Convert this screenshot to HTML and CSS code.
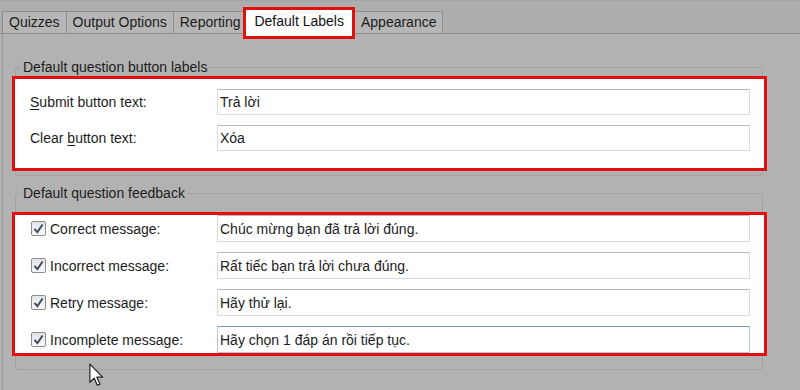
FILE: index.html
```html
<!DOCTYPE html>
<html lang="vi">
<head>
  <meta charset="UTF-8">
  <title>Default Labels</title>
  <link rel="stylesheet" href="styles.css">
</head>
<body>
  <div class="window">
    <div class="tabs">
      <div class="tab">Quizzes</div>
      <div class="tab">Output Options</div>
      <div class="tab">Reporting</div>
      <div class="tab active">Default Labels</div>
      <div class="tab">Appearance</div>
    </div>

    <div class="panel">
      <fieldset class="group group-buttons">
        <legend>Default question button labels</legend>
        <div class="highlight rows-buttons">
          <label class="row-label"><u>S</u>ubmit button text:</label>
          <input class="field" type="text" value="Trả lời">
          <label class="row-label">Clear <u>b</u>utton text:</label>
          <input class="field" type="text" value="Xóa">
        </div>
      </fieldset>

      <fieldset class="group group-feedback">
        <legend>Default question feedback</legend>
        <div class="highlight rows-feedback">
          <label class="row-label check-label"><span class="check"><svg viewBox="0 0 10 10" width="11" height="11"><path d="M1.3 5.3 L4 8.3 L8.7 1.3" fill="none" stroke="#3d4a5c" stroke-width="1.7"/></svg></span>Correct message:</label>
          <input class="field" type="text" value="Chúc mừng bạn đã trả lời đúng.">
          <label class="row-label check-label"><span class="check"><svg viewBox="0 0 10 10" width="11" height="11"><path d="M1.3 5.3 L4 8.3 L8.7 1.3" fill="none" stroke="#3d4a5c" stroke-width="1.7"/></svg></span>Incorrect message:</label>
          <input class="field" type="text" value="Rất tiếc bạn trả lời chưa đúng.">
          <label class="row-label check-label"><span class="check"><svg viewBox="0 0 10 10" width="11" height="11"><path d="M1.3 5.3 L4 8.3 L8.7 1.3" fill="none" stroke="#3d4a5c" stroke-width="1.7"/></svg></span>Retry message:</label>
          <input class="field" type="text" value="Hãy thử lại.">
          <label class="row-label check-label"><span class="check"><svg viewBox="0 0 10 10" width="11" height="11"><path d="M1.3 5.3 L4 8.3 L8.7 1.3" fill="none" stroke="#3d4a5c" stroke-width="1.7"/></svg></span>Incomplete message:</label>
          <input class="field focused" type="text" value="Hãy chọn 1 đáp án rồi tiếp tục.">
        </div>
      </fieldset>
    </div>

    <!-- mouse pointer -->
    <svg class="pointer" viewBox="0 0 13 20" width="17" height="24">
      <path d="M1 1 L1 16 L4.5 12.6 L7.2 18.6 L9.4 17.6 L6.8 11.8 L11.6 11.8 Z" fill="#fff" stroke="#222" stroke-width="1" stroke-linejoin="round"/>
    </svg>
  </div>
</body>
</html>
```

FILE: styles.css
```css
/* 对话框样式 */
body {
  margin: 0;
  background-color: #b2b2b2;
  font-family: "Liberation Sans", Arial, sans-serif;
  font-size: 14px;
  color: #1c1c1c;
}
.window {
  position: relative;
  height: 390px;
  overflow: hidden;
  border-top: 1px solid #a4a4a4;
}

/* 标签页 */
.tabs {
  display: flex;
  align-items: flex-end;
  height: 32px;
  padding-left: 2px;
  border-bottom: 1px solid #8e8e8e;
  background-color: #adadad;
}
.tab {
  height: 21px;
  line-height: 21px;
  padding: 0 6px;
  margin-right: -1px;
  border: 1px solid #8e8e8e;
  border-bottom: none;
  background-color: #b6b6b6;
  white-space: nowrap;
}
.tab.active {
  position: relative;
  z-index: 1;
  height: 22px;
  line-height: 22px;
  padding: 0 8px 4px 8px;
  margin-left: -3px;
  margin-bottom: -6px;
  border: 3px solid #e0100f;
  background-color: #ffffff;
  color: #111111;
}

/* 面板 */
.panel {
  margin-left: 2px;
  padding-top: 25px;
  border-left: 1px solid #9a9a9a;
  height: 356px;
}
.group {
  margin: 0 37px 0 12px;
  padding: 0 0 4px 0;
  border: 1px solid #a2a2a2;
  border-radius: 3px;
}
.group legend {
  margin-left: 5px;
  padding: 0 2px;
  line-height: 16px;
}
.group-feedback {
  margin-top: 9px;
  padding-bottom: 13px;
}
.highlight {
  display: grid;
  grid-template-columns: 187px 1fr;
  align-items: center;
  margin: 1px -5px 0 -4px;
  padding: 10px 14px 17px 15px;
  border: 3px solid #e0100f;
  background-color: #ffffff;
}
.rows-buttons {
  row-gap: 10px;
}
.rows-feedback {
  margin-top: 11px;
  padding-top: 0;
  padding-bottom: 0;
  row-gap: 10px;
}
.row-label {
  white-space: nowrap;
}
.row-label u {
  text-decoration-thickness: 1px;
  text-underline-offset: 2px;
}
.check-label {
  display: flex;
  align-items: center;
}
.check {
  display: inline-flex;
  align-items: center;
  justify-content: center;
  width: 13px;
  height: 13px;
  margin: 0 4px 0 1px;
  border: 1px solid #8a8f97;
  border-radius: 2px;
  background: linear-gradient(#e1e3e7, #fbfbfc);
}

/* 输入框 */
.field {
  box-sizing: border-box;
  width: 100%;
  height: 26px;
  margin: 0;
  padding: 0 2px;
  font-family: "Liberation Sans", Arial, sans-serif;
  font-size: 14px;
  color: #1c1c1c;
  background-color: #ffffff;
  border: 1px solid #dadada;
  border-top-color: #b9b9b9;
  border-radius: 1px;
  outline: none;
}
.rows-feedback .field {
  height: 27px;
}
.field.focused {
  border-color: #b5c7db;
  border-top-color: #7d9bbd;
}

/* 鼠标指针 */
.pointer {
  position: absolute;
  left: 88px;
  top: 362px;
}
```
